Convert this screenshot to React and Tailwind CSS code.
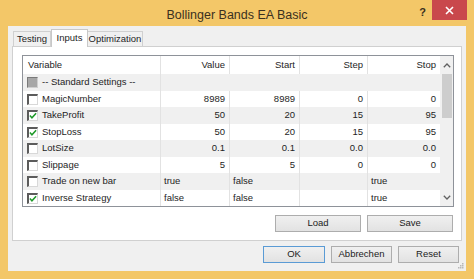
const FONT = { fontFamily: "'Liberation Sans', Arial, sans-serif" }

const ROWS = [
  { name: 'MagicNumber', checked: false, value: '8989', start: '8989', step: '0', stop: '0', num: true },
  { name: 'TakeProfit', checked: true, value: '50', start: '20', step: '15', stop: '95', num: true },
  { name: 'StopLoss', checked: true, value: '50', start: '20', step: '15', stop: '95', num: true },
  { name: 'LotSize', checked: false, value: '0.1', start: '0.1', step: '0.0', stop: '0.0', num: true },
  { name: 'Slippage', checked: false, value: '5', start: '5', step: '0', stop: '0', num: true },
  { name: 'Trade on new bar', checked: false, value: 'true', start: 'false', step: '', stop: 'true', num: false },
  { name: 'Inverse Strategy', checked: true, value: 'false', start: 'false', step: '', stop: 'true', num: false },
]

const HEIGHTS = [16, 17, 16, 17, 16, 17, 16]

function CheckBox({ checked, grey }) {
  if (grey) {
    return <span className="block w-[11px] h-[11px] border-t border-l border-[#7a7a7a] border-r border-b border-r-[#cfcfcf] border-b-[#cfcfcf] bg-[#a7a7a7]" />
  }
  return (
    <span className="flex items-center justify-center w-[11px] h-[11px] bg-white border-t-2 border-l-2 border-[#5b5b5b] border-r border-b border-r-[#d8d8d8] border-b-[#d8d8d8]">
      {checked ? (
        <svg width="9" height="8" viewBox="0 0 9 8">
          <path d="M1 3.5 L3.3 6 L8 0.8" fill="none" stroke="#1f9a2a" strokeWidth="1.7" />
        </svg>
      ) : null}
    </span>
  )
}

function WinButton({ children, w, focused }) {
  return (
    <div
      className={`${w} h-[17px] flex items-center justify-center text-[9.5px] text-[#222] bg-gradient-to-b from-[#f0f0f0] to-[#e2e2e2] border ${focused ? 'border-[#5a9bd5]' : 'border-[#adadad]'}`}
    >
      {children}
    </div>
  )
}

function Cell({ children, right, last }) {
  return (
    <div className={`flex items-center overflow-hidden ${right ? 'justify-end pr-[4px]' : 'pl-[3px]'} ${last ? '' : 'border-r border-[#e2e2e2]'}`}>
      {children}
    </div>
  )
}

export default function App() {
  return (
    <div className="w-[474px] h-[279px] bg-[#f3c768] flex flex-col text-[#1e1e1e]" style={FONT}>
      <div className="h-[28px] grid grid-cols-[1fr_auto_1fr]">
        <div />
        <div className="text-[12.5px] text-[#3a3020] pt-[6px]">Bollinger Bands EA Basic</div>
        <div className="flex justify-end items-start pr-[7px]">
          <span className="text-[11px] font-bold text-[#3a3020] mt-[4px] mr-[6px]">?</span>
          <div className="w-[35px] h-[20px] bg-[#c9484c] flex items-center justify-center">
            <svg width="9" height="9" viewBox="0 0 9 9">
              <path d="M1 1 L8 8 M8 1 L1 8" stroke="#fff" strokeWidth="1.6" />
            </svg>
          </div>
        </div>
      </div>

      <div className="flex-1 mx-[8px] mb-[8px] bg-[#f0f0f0] flex flex-col">
        <div className="h-[20px] flex items-end pl-[5px] pt-[3px] text-[9.5px]">
          <div className="w-[38px] h-[15px] border border-b-0 border-[#d0d0d0] bg-[#f0f0f0] flex items-center justify-center">Testing</div>
          <div className="w-[37px] h-[18px] border border-b-0 border-[#c8c8c8] bg-white flex items-start justify-center pt-[1px] -mb-px relative">Inputs</div>
          <div className="w-[55px] h-[15px] border border-b-0 border-l-0 border-[#d0d0d0] bg-[#f0f0f0] flex items-center justify-center">Optimization</div>
        </div>

        <div className="mx-[4px] h-[195px] border border-[#d0d0d0] bg-white flex flex-col pl-[9px] pr-[7px] pt-[8px]">
          <div className="h-[152px] border border-[#8e9299] flex text-[9.5px]">
            <div className="flex-1 flex flex-col">
              <div className="h-[18px] grid grid-cols-[138px_69px_70px_68px_72px] bg-white">
                <Cell><span className="pl-[2px]">Variable</span></Cell>
                <Cell right>Value</Cell>
                <Cell right>Start</Cell>
                <Cell right>Step</Cell>
                <Cell right last>Stop</Cell>
              </div>
              <div className="h-[17px] grid grid-cols-[138px_1fr] bg-[#f0f0f0]">
                <div className="flex items-center pl-[4px] border-r border-[#e2e2e2]">
                  <CheckBox grey />
                  <span className="ml-[4px]">-- Standard Settings --</span>
                </div>
                <div />
              </div>
              {ROWS.map((row, i) => (
                <div
                  key={row.name}
                  className={`grid grid-cols-[138px_69px_70px_68px_72px] ${i % 2 === 1 ? 'bg-[#f0f0f0]' : 'bg-white'}`}
                  style={{ height: HEIGHTS[i] }}
                >
                  <div className="flex items-center pl-[4px] border-r border-[#e2e2e2]">
                    <CheckBox checked={row.checked} />
                    <span className="ml-[4px]">{row.name}</span>
                  </div>
                  <Cell right={row.num}>{row.value}</Cell>
                  <Cell right={row.num}>{row.start}</Cell>
                  <Cell right={row.num}>{row.step}</Cell>
                  <Cell right={row.num} last>{row.stop}</Cell>
                </div>
              ))}
            </div>
            <div className="w-[14px] bg-[#f0f0f0] flex flex-col items-center">
              <div className="h-[18px] flex items-center justify-center">
                <svg width="8" height="5" viewBox="0 0 8 5">
                  <path d="M0.8 4.2 L4 1 L7.2 4.2" fill="none" stroke="#606060" strokeWidth="1.3" />
                </svg>
              </div>
              <div className="w-[10px] h-[44px] bg-[#cdcdcd]" />
              <div className="flex-1" />
              <div className="h-[17px] flex items-center justify-center">
                <svg width="8" height="5" viewBox="0 0 8 5">
                  <path d="M0.8 0.8 L4 4 L7.2 0.8" fill="none" stroke="#606060" strokeWidth="1.3" />
                </svg>
              </div>
            </div>
          </div>
          <div className="flex justify-end gap-[6px] mt-[8px] pr-[1px]">
            <WinButton w="w-[86px]">Load</WinButton>
            <WinButton w="w-[86px]">Save</WinButton>
          </div>
        </div>

        <div className="flex justify-end gap-[6px] pt-[5px] pr-[7px]">
          <WinButton w="w-[62px]" focused>OK</WinButton>
          <WinButton w="w-[61px]">Abbrechen</WinButton>
          <WinButton w="w-[61px]">Reset</WinButton>
        </div>
        <div className="flex-1 flex justify-end items-end pr-[2px] pb-[2px]">
          <svg width="6" height="6" viewBox="0 0 6 6">
            <rect x="4" y="0" width="1.5" height="1.5" fill="#b8b8b8" />
            <rect x="2" y="2" width="1.5" height="1.5" fill="#b8b8b8" />
            <rect x="4" y="2" width="1.5" height="1.5" fill="#b8b8b8" />
            <rect x="0" y="4" width="1.5" height="1.5" fill="#b8b8b8" />
            <rect x="2" y="4" width="1.5" height="1.5" fill="#b8b8b8" />
            <rect x="4" y="4" width="1.5" height="1.5" fill="#b8b8b8" />
          </svg>
        </div>
      </div>
    </div>
  )
}
